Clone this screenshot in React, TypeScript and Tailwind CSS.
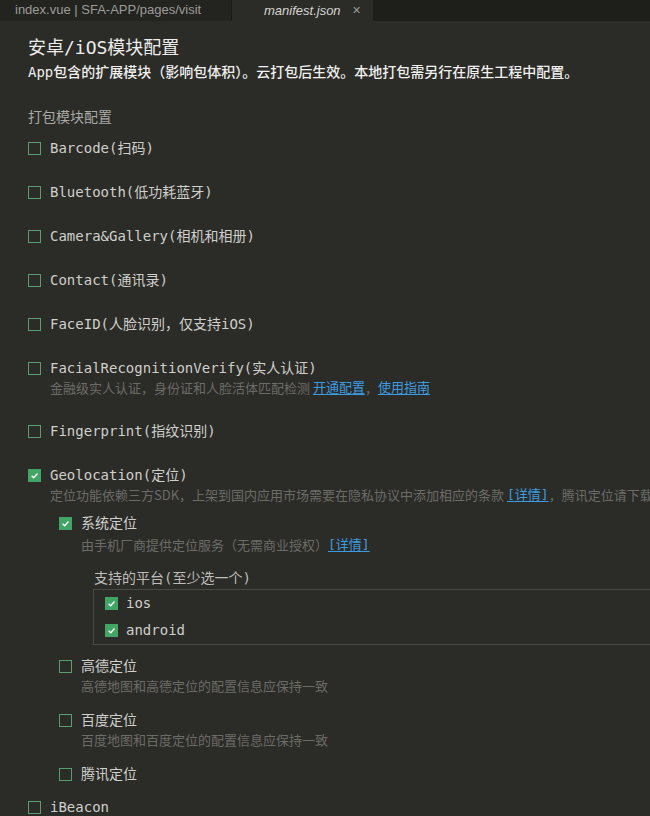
const mono = "font-['DejaVu_Sans_Mono','Noto_Sans_CJK_SC',monospace]";
const sans = "font-['Noto_Sans_CJK_SC','Noto_Sans',sans-serif]";

const Check = ({ on }: { on?: boolean }) =>
  on ? (
    <span className="mt-[4px] flex h-[13px] w-[13px] shrink-0 items-center justify-center self-start bg-[#43a565]">
      <svg width="9" height="9" viewBox="0 0 10 10">
        <path d="M1.8 5.2 L4.1 7.4 L8.3 2.8" stroke="#ffffff" strokeWidth="1.5" fill="none" />
      </svg>
    </span>
  ) : (
    <span className="mt-[4px] h-[13px] w-[13px] shrink-0 self-start border border-[#5a9c74]" />
  );

const Row = ({ label, on }: { label: string; on?: boolean }) => (
  <div className="flex h-5 gap-[9px]">
    <Check on={on} />
    <span className={`${mono} text-[14px] leading-5 text-[#cfcfcb] whitespace-nowrap`}>{label}</span>
  </div>
);

const Desc = ({ children, className = "" }: { children: React.ReactNode; className?: string }) => (
  <p className={`${sans} flex h-[19px] items-center pl-[22px] text-[13px] leading-[19px] text-[#6c6c67] whitespace-nowrap ${className}`}>
    {children}
  </p>
);

const Link = ({ children }: { children: React.ReactNode }) => (
  <span className={`${mono} leading-[19px] text-[#3d9be0] underline underline-offset-2`}>{children}</span>
);

const Platform = ({ label }: { label: string }) => (
  <div className="flex h-[27px] gap-[8px] pl-[11px] pt-[3px]">
    <Check on />
    <span className={`${mono} text-[14px] leading-[21px] text-[#cfcfcb]`}>{label}</span>
  </div>
);

export default function App() {
  return (
    <div className="h-[816px] w-[650px] overflow-hidden bg-[#2b2b27]">
      <div className="flex h-[21px] bg-[#1e1e1b]">
        <div className="w-[232px] border-r border-[#191917] bg-[#232320] pl-[15px] font-['Liberation_Sans',sans-serif] text-[13px] leading-[20px] text-[#9c9c98]">
          index.vue | SFA-APP/pages/visit
        </div>
        <div className="flex w-[141px] items-center bg-[#2b2b27] pl-[32px] font-['Liberation_Sans',sans-serif] text-[13px] text-[#d6d6d2]">
          <span className="italic">manifest.json</span>
          <span className="ml-[12px] text-[14px] text-[#9c9c98]">×</span>
        </div>
      </div>

      <div className="pl-[28px]">
        <h1 className={`${mono} mt-[15px] text-[18px] leading-6 text-[#ececea]`}>安卓/iOS模块配置</h1>
        <p className={`${mono} mt-[2px] text-[14px] font-medium leading-5 text-[#f0f0ee] whitespace-nowrap`}>
          App包含的扩展模块（影响包体积）。云打包后生效。本地打包需另行在原生工程中配置。
        </p>
        <p className={`${mono} mt-[25px] text-[14px] leading-5 text-[#a9a9a5]`}>打包模块配置</p>

        <div className="mt-[11px]">
          <Row label="Barcode(扫码)" />
        </div>
        <div className="mt-[24px]">
          <Row label="Bluetooth(低功耗蓝牙)" />
        </div>
        <div className="mt-[24px]">
          <Row label="Camera&Gallery(相机和相册)" />
        </div>
        <div className="mt-[24px]">
          <Row label="Contact(通讯录)" />
        </div>
        <div className="mt-[24px]">
          <Row label="FaceID(人脸识别，仅支持iOS)" />
        </div>
        <div className="mt-[24px]">
          <Row label="FacialRecognitionVerify(实人认证)" />
          <Desc>
            <span>金融级实人认证，身份证和人脸活体匹配检测&nbsp;</span>
            <Link>开通配置</Link>
            <span>，</span>
            <Link>使用指南</Link>
          </Desc>
        </div>
        <div className="mt-[24px]">
          <Row label="Fingerprint(指纹识别)" />
        </div>
        <div className="mt-[24px]">
          <Row label="Geolocation(定位)" on />
          <Desc>
            <span>定位功能依赖三方SDK，上架到国内应用市场需要在隐私协议中添加相应的条款&nbsp;</span>
            <Link>[详情]</Link>
            <span>，腾讯定位请下载</span>
          </Desc>

          <div className="pl-[31px]">
            <div className="mt-[9px]">
              <Row label="系统定位" on />
              <Desc className="mt-[2px]">
                <span>由手机厂商提供定位服务（无需商业授权）</span>
                <Link>[详情]</Link>
              </Desc>
            </div>

            <p className={`${mono} mt-[14px] pl-[35px] text-[14px] leading-5 text-[#bdbdb9]`}>支持的平台(至少选一个)</p>
            <div className="ml-[34px] mt-[1px] w-[600px] border border-[#4a4a45]">
              <Platform label="ios" />
              <Platform label="android" />
            </div>

            <div className="mt-[11px]">
              <Row label="高德定位" />
              <Desc>高德地图和高德定位的配置信息应保持一致</Desc>
            </div>
            <div className="mt-[15px]">
              <Row label="百度定位" />
              <Desc>百度地图和百度定位的配置信息应保持一致</Desc>
            </div>
            <div className="mt-[15px]">
              <Row label="腾讯定位" />
            </div>
          </div>
        </div>
        <div className="mt-[13px]">
          <Row label="iBeacon" />
        </div>
      </div>
    </div>
  );
}
